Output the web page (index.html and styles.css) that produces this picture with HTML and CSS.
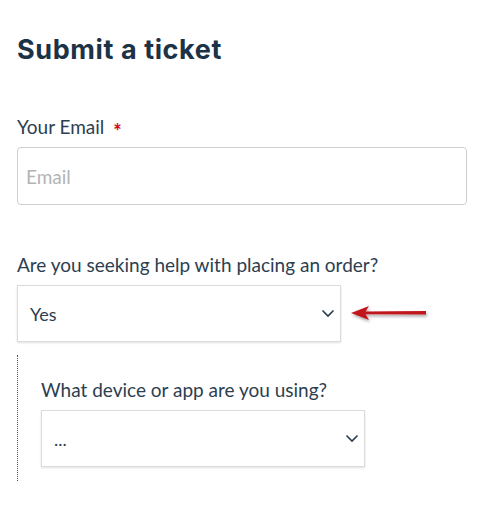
FILE: index.html
```html
<!DOCTYPE html>
<html>
<head>
<meta charset="utf-8">
<link rel="stylesheet" href="styles.css">
</head>
<body>
<div class="page">
  <h1 class="title">Submit a ticket</h1>
  <div class="field field-email">
    <label class="label">Your Email <span class="req">*</span></label>
    <div class="input"><span class="placeholder">Email</span></div>
  </div>
  <div class="field field-order">
    <label class="label">Are you seeking help with placing an order?</label>
    <div class="select-row">
      <div class="select">
        <span class="value">Yes</span>
        <svg class="chev" width="14" height="9" viewBox="0 0 14 9"><path d="M1.5 1.5 L7 7 L12.5 1.5" fill="none" stroke="#2a3b4d" stroke-width="1.6"/></svg>
      </div>
      <svg class="arrow" width="90" height="22" viewBox="0 0 90 22">
        <defs>
          <filter id="sh" x="-20%" y="-50%" width="140%" height="200%">
            <feDropShadow dx="1" dy="2" stdDeviation="1.5" flood-color="#000" flood-opacity="0.35"/>
          </filter>
        </defs>
        <g filter="url(#sh)">
          <path d="M1 9 L19 2 L15.5 7.5 L76 7 L76 10.6 L15.5 10.3 L19 16 Z" fill="#c0141c"/>
        </g>
      </svg>
    </div>
  </div>
  <div class="sub">
    <div class="field field-device">
      <label class="label">What device or app are you using?</label>
      <div class="select">
        <span class="value">...</span>
        <svg class="chev" width="14" height="9" viewBox="0 0 14 9"><path d="M1.5 1.5 L7 7 L12.5 1.5" fill="none" stroke="#2a3b4d" stroke-width="1.6"/></svg>
      </div>
    </div>
  </div>
</div>
</body>
</html>
```
FILE: styles.css
```css
html, body {
  margin: 0;
  padding: 0;
  background: #fff;
}
.page {
  padding: 30px 16px 0 17px;
  font-family: "Lato", "Open Sans", sans-serif;
  color: #2c3e50;
}
.title {
  margin: 0;
  font-family: "Inter", "DejaVu Sans", sans-serif;
  font-weight: 700;
  font-size: 27px;
  line-height: 40px;
  color: #1c3246;
  letter-spacing: 0.6px;
}
.field {
  display: flex;
  flex-direction: column;
}
.field-email {
  margin-top: 44px;
}
.label {
  font-size: 19px;
  line-height: 24px;
  color: #2c3e50;
  margin-bottom: 8px;
}
.req {
  color: #d0021b;
  font-size: 20px;
  margin-left: 4px;
  font-weight: 700;
  position: relative;
  top: 5px;
}
.input {
  border: 1px solid #cfcfcf;
  border-radius: 4px;
  display: flex;
  align-items: center;
  padding-left: 8px;
  box-sizing: border-box;
  height: 58px;
}
.placeholder {
  color: #b4b4b4;
  font-size: 19px;
}
.field-order {
  margin-top: 48px;
}
.field-order .label {
  margin-bottom: 8px;
}
.select-row {
  display: flex;
  align-items: center;
}
.select {
  width: 324px;
  height: 57px;
  box-sizing: border-box;
  border: 1px solid #dcdcdc;
  box-shadow: 0 1px 2px rgba(0,0,0,0.12);
  display: flex;
  align-items: center;
  justify-content: space-between;
  padding: 0 5px 0 12px;
}
.value {
  font-size: 18px;
  color: #2c3e50;
}
.chev {
  display: block;
}
.arrow {
  margin-left: 9px;
  margin-top: 2px;
}
.sub {
  margin-top: 13px;
  border-left: 1px dotted #555;
  padding: 23px 0 14px 23px;
}
.field-device .label {
  margin-bottom: 8px;
}
```
